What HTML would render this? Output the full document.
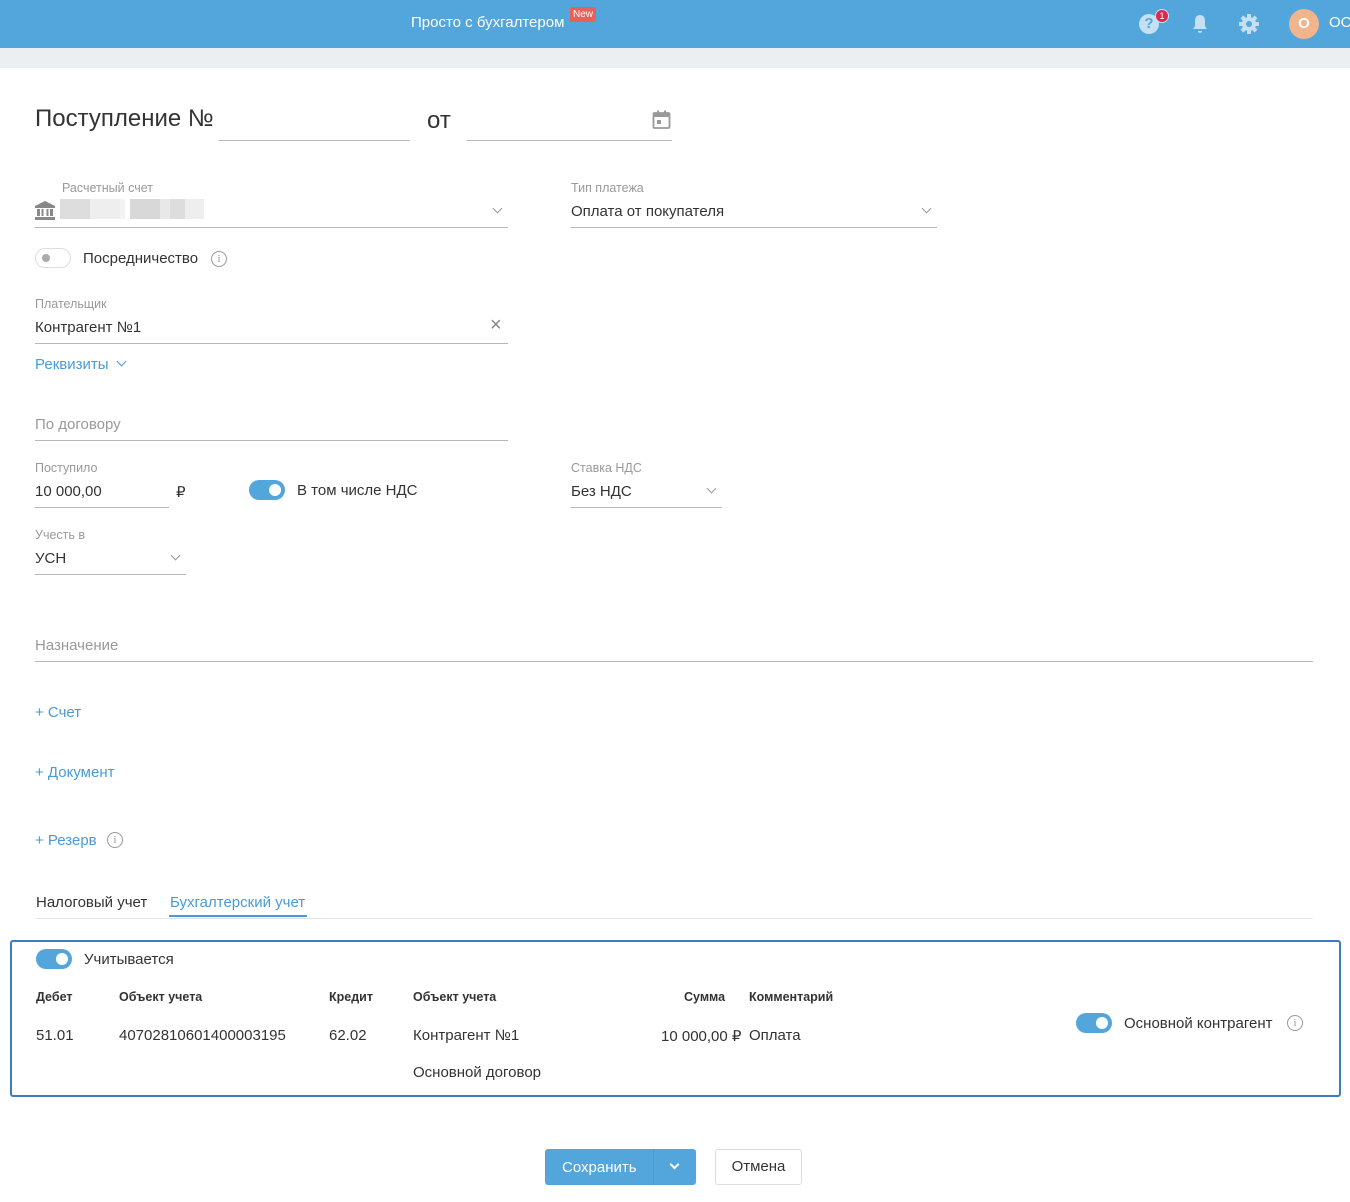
<!DOCTYPE html>
<html><head><meta charset="utf-8"><style>
*{box-sizing:border-box;margin:0;padding:0}
body{width:1350px;height:1202px;background:#fff;font-family:"Liberation Sans",sans-serif;color:#333;position:relative;overflow:hidden;font-size:15px}
.a{position:absolute;white-space:nowrap}
.hdr{position:absolute;left:0;top:0;width:1350px;height:48px;background:#53a6dc}
.band{position:absolute;left:0;top:48px;width:1350px;height:20px;background:#ebeff2}
.lbl{font-size:12.5px;color:#999}
.line{position:absolute;height:1px;background:#b8b8b8}
.chev{position:absolute;width:7px;height:7px;border-right:1.5px solid #999;border-bottom:1.5px solid #999;transform:rotate(45deg)}
.blue{color:#4a9ad8}
.tog{position:absolute;width:36px;height:20px;border-radius:10px;background:#53a6dc}
.tog::after{content:"";position:absolute;right:4px;top:4px;width:12px;height:12px;border-radius:50%;background:#fff}
.info{position:absolute;width:16px;height:16px;border:1.3px solid #999;border-radius:50%;font-size:11px;color:#999;text-align:center;line-height:14px;font-family:"Liberation Serif",serif}
.b{font-weight:bold;font-size:12.5px;color:#333}
</style></head><body>
<div class="hdr"></div>
<div class="a" style="left:411px;top:14px;color:#fff;font-size:15px">Просто с бухгалтером</div>
<div class="a" style="left:570px;top:7px;background:#e8605a;color:#fff;font-size:10px;padding:2px 3px;border-radius:2px">New</div>
<div class="a" style="left:1139px;top:14px;width:20px;height:20px;border-radius:50%;background:#c5dff3;color:#53a6dc;font-weight:bold;text-align:center;line-height:20px;font-size:15px">?</div>
<div class="a" style="left:1155px;top:9px;width:14px;height:14px;border-radius:50%;background:#e0284f;color:#fff;font-size:9px;text-align:center;line-height:12px;border:1px solid #c5dff3">1</div>
<svg class="a" style="left:1190px;top:13px" width="20" height="22" viewBox="0 0 20 22"><path d="M10 2c-3.5 0-5 2.5-5 6v5l-2 3h14l-2-3V8c0-3.5-1.5-6-5-6z M8 18h4a2 2 0 0 1-4 0z" fill="#c5dff3"/></svg>
<svg class="a" style="left:1238px;top:13px" width="22" height="22" viewBox="0 0 22 22"><g fill="#c5dff3"><circle cx="11" cy="11" r="7"/><rect x="9" y="1" width="4" height="20"/><rect x="1" y="9" width="20" height="4"/><rect x="9" y="1" width="4" height="20" transform="rotate(45 11 11)"/><rect x="9" y="1" width="4" height="20" transform="rotate(-45 11 11)"/></g><circle cx="11" cy="11" r="3" fill="#53a6dc"/></svg>
<div class="a" style="left:1289px;top:9px;width:30px;height:30px;border-radius:50%;background:#f2b48b;color:#fff;font-weight:bold;text-align:center;line-height:30px;font-size:15px">О</div>
<div class="a" style="left:1329px;top:14px;color:#fff;font-size:15px">ОО</div>
<div class="band"></div>

<div class="a" style="left:35px;top:105px;font-size:24px;color:#333">Поступление №</div>
<div class="line" style="left:219px;top:140px;width:191px"></div>
<div class="a" style="left:427px;top:107px;font-size:24px;color:#333">от</div>
<div class="line" style="left:467px;top:140px;width:205px"></div>
<svg class="a" style="left:652px;top:110px" width="19" height="20" viewBox="0 0 19 20"><rect x="1.5" y="3" width="16" height="15" rx="1" fill="none" stroke="#999" stroke-width="1.8"/><rect x="1.5" y="3" width="16" height="4" fill="#999"/><rect x="5" y="0.5" width="2" height="4" fill="#999"/><rect x="12" y="0.5" width="2" height="4" fill="#999"/><rect x="5" y="10" width="4" height="4" fill="#999"/></svg>

<div class="a lbl" style="left:62px;top:181px">Расчетный счет</div>
<svg class="a" style="left:35px;top:201px" width="20" height="19" viewBox="0 0 20 19"><path d="M10 0L0 5v2h20V5z M2 8h3v7H2z M6.5 8h2v7h-2z M11.5 8h2v7h-2z M15 8h3v7h-3z M0 16h20v3H0z" fill="#888"/></svg>
<div class="a" style="left:60px;top:199px;width:144px;height:20px;background:linear-gradient(90deg,#ddd 0 30px,#eee 30px 60px,#f3f3f3 60px 65px,#fff 65px 70px,#d8d8d8 70px 100px,#e8e8e8 100px 110px,#ddd 110px 125px,#eee 125px)"></div>
<div class="chev" style="left:494px;top:205px"></div>
<div class="line" style="left:35px;top:227px;width:473px"></div>

<div class="a lbl" style="left:571px;top:181px">Тип платежа</div>
<div class="a" style="left:571px;top:203px">Оплата от покупателя</div>
<div class="chev" style="left:923px;top:205px"></div>
<div class="line" style="left:571px;top:227px;width:366px"></div>

<div class="a" style="left:35px;top:248px;width:36px;height:20px;border:1px solid #ddd;border-radius:10px"></div>
<div class="a" style="left:42px;top:254px;width:8px;height:8px;border-radius:50%;background:#aaa"></div>
<div class="a" style="left:83px;top:250px">Посредничество</div>
<div class="info" style="left:211px;top:251px">i</div>

<div class="a lbl" style="left:35px;top:297px">Плательщик</div>
<div class="a" style="left:35px;top:319px">Контрагент №1</div>
<div class="a" style="left:490px;top:314px;color:#888;font-size:20px">×</div>
<div class="line" style="left:35px;top:343px;width:473px"></div>
<div class="a blue" style="left:35px;top:356px">Реквизиты</div>
<div class="chev" style="left:118px;top:358px;border-color:#4a9ad8"></div>

<div class="a" style="left:35px;top:416px;color:#999">По договору</div>
<div class="line" style="left:35px;top:440px;width:473px"></div>

<div class="a lbl" style="left:35px;top:461px">Поступило</div>
<div class="a" style="left:35px;top:483px">10 000,00</div>
<div class="line" style="left:35px;top:507px;width:134px"></div>
<div class="a" style="left:176px;top:483px">₽</div>
<div class="tog" style="left:249px;top:480px"></div>
<div class="a" style="left:297px;top:482px">В том числе НДС</div>
<div class="a lbl" style="left:571px;top:461px">Ставка НДС</div>
<div class="a" style="left:571px;top:483px">Без НДС</div>
<div class="chev" style="left:708px;top:485px"></div>
<div class="line" style="left:571px;top:507px;width:151px"></div>

<div class="a lbl" style="left:35px;top:528px">Учесть в</div>
<div class="a" style="left:35px;top:550px">УСН</div>
<div class="chev" style="left:172px;top:552px"></div>
<div class="line" style="left:35px;top:574px;width:151px"></div>

<div class="a" style="left:35px;top:637px;color:#999">Назначение</div>
<div class="line" style="left:35px;top:661px;width:1278px"></div>

<div class="a blue" style="left:35px;top:704px">+ Счет</div>
<div class="a blue" style="left:35px;top:764px">+ Документ</div>
<div class="a blue" style="left:35px;top:832px">+ Резерв</div>
<div class="info" style="left:107px;top:832px">i</div>

<div class="a" style="left:36px;top:894px">Налоговый учет</div>
<div class="a blue" style="left:170px;top:894px">Бухгалтерский учет</div>
<div class="line" style="left:35px;top:918px;width:1278px;background:#e5e5e5"></div>
<div class="a" style="left:169px;top:915px;width:138px;height:2px;background:#4a9ad8"></div>

<div class="a" style="left:10px;top:940px;width:1331px;height:157px;border:2px solid #3a7dc4;border-radius:3px"></div>
<div class="tog" style="left:36px;top:949px"></div>
<div class="a" style="left:84px;top:951px">Учитывается</div>
<div class="a b" style="left:36px;top:990px">Дебет</div>
<div class="a b" style="left:119px;top:990px">Объект учета</div>
<div class="a b" style="left:329px;top:990px">Кредит</div>
<div class="a b" style="left:413px;top:990px">Объект учета</div>
<div class="a b" style="left:684px;top:990px">Сумма</div>
<div class="a b" style="left:749px;top:990px">Комментарий</div>
<div class="a" style="left:36px;top:1027px">51.01</div>
<div class="a" style="left:119px;top:1027px">40702810601400003195</div>
<div class="a" style="left:329px;top:1027px">62.02</div>
<div class="a" style="left:413px;top:1027px">Контрагент №1</div>
<div class="a" style="left:661px;top:1027px">10 000,00 ₽</div>
<div class="a" style="left:749px;top:1027px">Оплата</div>
<div class="a" style="left:413px;top:1064px">Основной договор</div>
<div class="tog" style="left:1076px;top:1013px"></div>
<div class="a" style="left:1124px;top:1015px">Основной контрагент</div>
<div class="info" style="left:1287px;top:1015px">i</div>

<div class="a" style="left:545px;top:1149px;width:151px;height:36px;background:#53a6dc;border-radius:3px"></div>
<div class="a" style="left:653px;top:1149px;width:1px;height:36px;background:#4a98cf"></div>
<div class="a" style="left:562px;top:1159px;color:#fff">Сохранить</div>
<div class="chev" style="left:671px;top:1161px;border-color:#fff;border-width:2px"></div>
<div class="a" style="left:715px;top:1149px;width:87px;height:36px;border:1px solid #ddd;border-radius:3px;text-align:center;line-height:34px">Отмена</div>
</body></html>
